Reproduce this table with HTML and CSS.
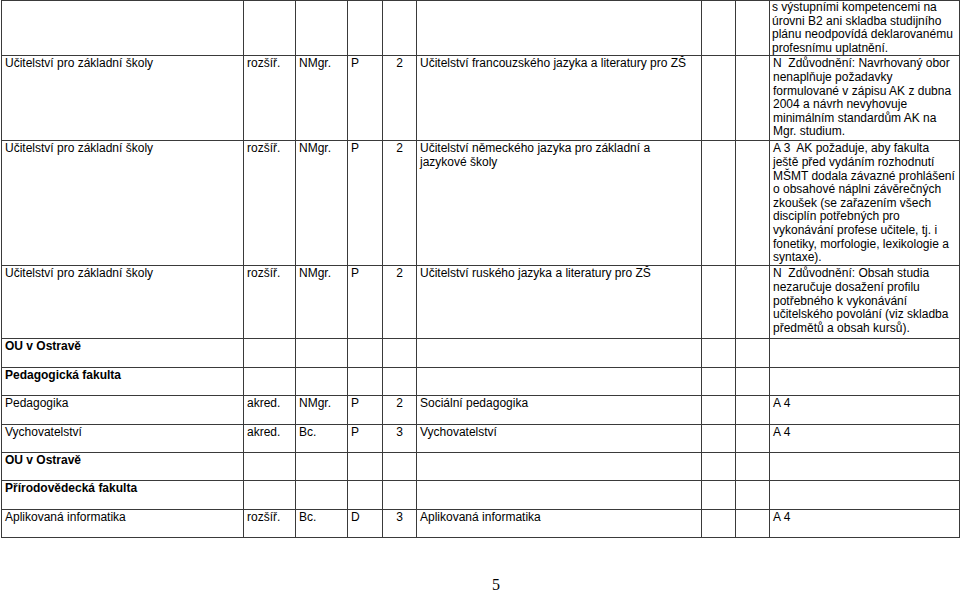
FILE: index.html
```html
<!DOCTYPE html>
<html lang="cs">
<head>
<meta charset="utf-8">
<title>Tabulka</title>
<link rel="stylesheet" href="styles.css">
</head>
<body>
<table class="grid">
  <colgroup>
    <col class="c-name"><col class="c-type"><col class="c-deg"><col class="c-form"><col class="c-len"><col class="c-field"><col class="c-x"><col class="c-x"><col class="c-note">
  </colgroup>
  <tr class="r0">
    <td></td><td></td><td></td><td></td><td></td><td></td><td></td><td></td>
    <td class="top0">s výstupními kompetencemi na<br>úrovni B2 ani skladba studijního<br>plánu neodpovídá deklarovanému<br>profesnímu uplatnění.</td>
  </tr>
  <tr class="r1">
    <td>Učitelství pro základní školy</td><td>rozšíř.</td><td>NMgr.</td><td>P</td><td class="num">2</td>
    <td>Učitelství francouzského jazyka a literatury pro ZŠ</td><td></td><td></td>
    <td>N&nbsp; Zdůvodnění: Navrhovaný obor<br>nenaplňuje požadavky<br>formulované v zápisu AK z dubna<br>2004 a návrh nevyhovuje<br>minimálním standardům AK na<br>Mgr. studium.</td>
  </tr>
  <tr class="r2">
    <td>Učitelství pro základní školy</td><td>rozšíř.</td><td>NMgr.</td><td>P</td><td class="num">2</td>
    <td>Učitelství německého jazyka pro základní a<br>jazykové školy</td><td></td><td></td>
    <td>A 3&nbsp; AK požaduje, aby fakulta<br>ještě před vydáním rozhodnutí<br>MŠMT dodala závazné prohlášení<br>o obsahové náplni závěrečných<br>zkoušek (se zařazením všech<br>disciplín potřebných pro<br>vykonávání profese učitele, tj. i<br>fonetiky, morfologie, lexikologie a<br>syntaxe).</td>
  </tr>
  <tr class="r3">
    <td>Učitelství pro základní školy</td><td>rozšíř.</td><td>NMgr.</td><td>P</td><td class="num">2</td>
    <td>Učitelství ruského jazyka a literatury pro ZŠ</td><td></td><td></td>
    <td>N&nbsp; Zdůvodnění: Obsah studia<br>nezaručuje dosažení profilu<br>potřebného k vykonávání<br>učitelského povolání (viz skladba<br>předmětů a obsah kursů).</td>
  </tr>
  <tr class="rs">
    <td class="b">OU v Ostravě</td><td></td><td></td><td></td><td></td><td></td><td></td><td></td><td></td>
  </tr>
  <tr class="rs">
    <td class="b">Pedagogická fakulta</td><td></td><td></td><td></td><td></td><td></td><td></td><td></td><td></td>
  </tr>
  <tr class="rs">
    <td>Pedagogika</td><td>akred.</td><td>NMgr.</td><td>P</td><td class="num">2</td>
    <td>Sociální pedagogika</td><td></td><td></td><td>A 4</td>
  </tr>
  <tr class="rs">
    <td>Vychovatelství</td><td>akred.</td><td>Bc.</td><td>P</td><td class="num">3</td>
    <td>Vychovatelství</td><td></td><td></td><td>A 4</td>
  </tr>
  <tr class="rs">
    <td class="b">OU v Ostravě</td><td></td><td></td><td></td><td></td><td></td><td></td><td></td><td></td>
  </tr>
  <tr class="rs">
    <td class="b">Přírodovědecká fakulta</td><td></td><td></td><td></td><td></td><td></td><td></td><td></td><td></td>
  </tr>
  <tr class="rs">
    <td>Aplikovaná informatika</td><td>rozšíř.</td><td>Bc.</td><td>D</td><td class="num">3</td>
    <td>Aplikovaná informatika</td><td></td><td></td><td>A 4</td>
  </tr>
</table>
<div class="page-num">5</div>
</body>
</html>
```
FILE: styles.css
```css
html, body {
  margin: 0;
  padding: 0;
  background: #fff;
}

body {
  font-family: "Liberation Sans", Arial, sans-serif;
  font-size: 12px;
  color: #000;
}

.grid {
  border-collapse: collapse;
  table-layout: fixed;
  width: 958px;
  margin-left: 1px;
}

.c-name { width: 242px; }
.c-type { width: 52px; }
.c-deg { width: 52px; }
.c-form { width: 35px; }
.c-len { width: 34px; }
.c-field { width: 285px; }
.c-x { width: 34px; }
.c-note { width: 190px; }

.grid td {
  border: 1px solid #3a3a3a;
  padding: 1px 2px 0 3px;
  vertical-align: top;
  line-height: 13.6px;
  white-space: nowrap;
  overflow: hidden;
}

.grid td.num {
  text-align: center;
  padding-left: 2px;
}

.grid td.b {
  font-weight: bold;
}

.grid td.top0 {
  padding-top: 0;
  padding-left: 2px;
}

.r0 td { height: 52px; }
.r1 td { height: 83px; }
.r2 td { height: 123px; }
.r3 td { height: 71px; }
.rs td { height: 26.4px; }

.page-num {
  font-family: "Liberation Serif", "Times New Roman", serif;
  font-size: 16px;
  line-height: 14px;
  padding-left: 492px;
  margin-top: 40px;
}
```
